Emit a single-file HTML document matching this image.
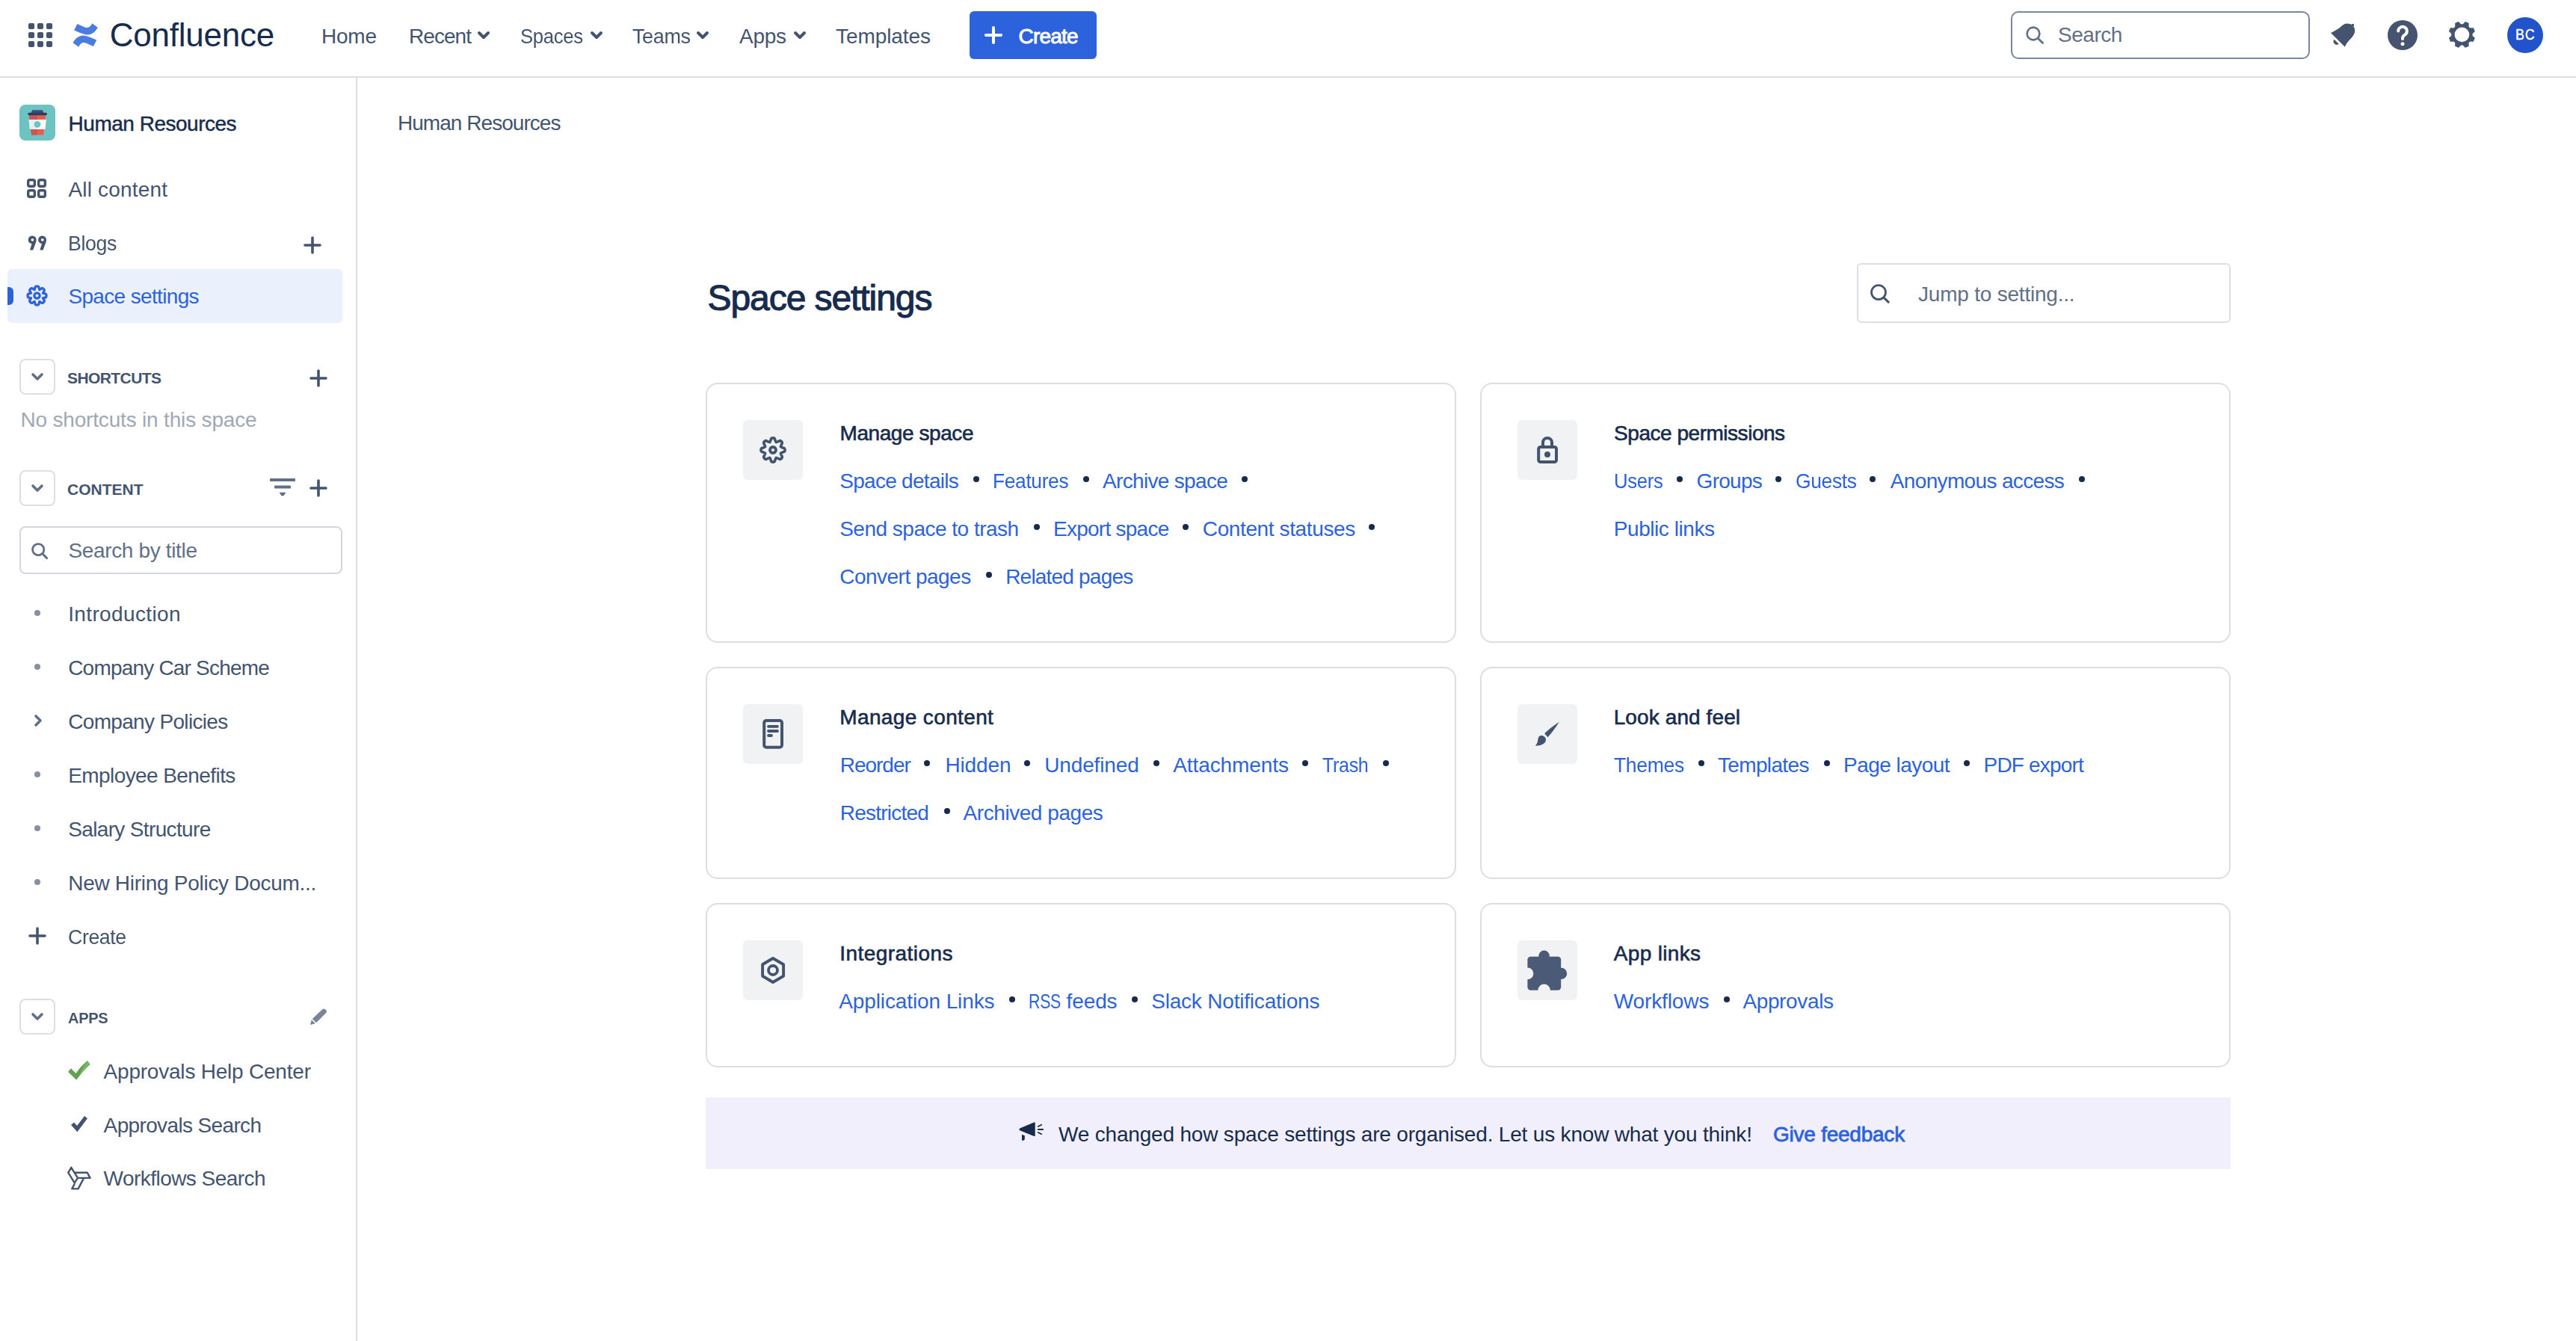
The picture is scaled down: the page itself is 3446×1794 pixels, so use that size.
<!DOCTYPE html>
<html>
<head>
<meta charset="utf-8">
<title>Space settings - Confluence</title>
<style>
@media (min-width:2400px){html{zoom:2}}
*{box-sizing:border-box;margin:0;padding:0}
body{width:1723px;height:897px;overflow:hidden;background:#fff;font-family:"Liberation Sans",sans-serif;font-size:14px;color:#44546F;position:relative}
.a{position:absolute;white-space:nowrap}
svg{position:absolute;overflow:visible}
</style>
</head>
<body>
<div class="a" style="left:0;top:51px;width:1723px;height:1px;background:#DCDEE3"></div>
<svg style="left:19px;top:15.5px" width="16" height="16" viewBox="0 0 16 16" fill="#44546F">
<rect x="0" y="0" width="4" height="4" rx="1"/><rect x="6" y="0" width="4" height="4" rx="1"/><rect x="12" y="0" width="4" height="4" rx="1"/>
<rect x="0" y="6" width="4" height="4" rx="1"/><rect x="6" y="6" width="4" height="4" rx="1"/><rect x="12" y="6" width="4" height="4" rx="1"/>
<rect x="0" y="12" width="4" height="4" rx="1"/><rect x="6" y="12" width="4" height="4" rx="1"/><rect x="12" y="12" width="4" height="4" rx="1"/></svg>
<svg style="left:49px;top:15.5px" width="16" height="16" viewBox="0 0 16 16" fill="#4A7CE0"><path d="M2.75 0.5 C6 2 8 3.1 9.5 3.0 C11 2.9 12 1.5 12.6 0.15 L16.4 2.9 C15 5.6 12.5 7.8 9.5 7.8 C7 7.7 3 5.8 0.56 4.8 Z"/><path d="M2.75 0.5 C6 2 8 3.1 9.5 3.0 C11 2.9 12 1.5 12.6 0.15 L16.4 2.9 C15 5.6 12.5 7.8 9.5 7.8 C7 7.7 3 5.8 0.56 4.8 Z" transform="rotate(180 8.1 8)"/></svg>
<div class="a" style="left:73.40px;top:11.41px;font-size:22px;line-height:24px;letter-spacing:-0.122px;color:#172B4D">Confluence</div>
<div class="a" style="left:215.00px;top:14.48px;font-size:14px;line-height:20px;letter-spacing:-0.117px;color:#44546F">Home</div>
<div class="a" style="left:273.50px;top:14.48px;font-size:14px;line-height:20px;letter-spacing:-0.470px;color:#44546F">Recent</div>
<div class="a" style="left:348.00px;top:14.48px;font-size:14px;line-height:20px;letter-spacing:-0.200px;color:#44546F;transform:scaleX(0.9192);transform-origin:0 0">Spaces</div>
<div class="a" style="left:423.00px;top:14.48px;font-size:14px;line-height:20px;letter-spacing:-0.200px;color:#44546F;transform:scaleX(0.9646);transform-origin:0 0">Teams</div>
<div class="a" style="left:494.50px;top:14.48px;font-size:14px;line-height:20px;letter-spacing:-0.135px;color:#44546F">Apps</div>
<div class="a" style="left:559.00px;top:14.48px;font-size:14px;line-height:20px;letter-spacing:-0.039px;color:#44546F">Templates</div>
<svg style="left:319.5px;top:21.2px" width="8" height="5" viewBox="0 0 8 5"><path d="M1 1 L4 4 L7 1" fill="none" stroke="#44546F" stroke-width="2" stroke-linecap="round" stroke-linejoin="round"/></svg>
<svg style="left:395.0px;top:21.2px" width="8" height="5" viewBox="0 0 8 5"><path d="M1 1 L4 4 L7 1" fill="none" stroke="#44546F" stroke-width="2" stroke-linecap="round" stroke-linejoin="round"/></svg>
<svg style="left:466.0px;top:21.2px" width="8" height="5" viewBox="0 0 8 5"><path d="M1 1 L4 4 L7 1" fill="none" stroke="#44546F" stroke-width="2" stroke-linecap="round" stroke-linejoin="round"/></svg>
<svg style="left:531.0px;top:21.2px" width="8" height="5" viewBox="0 0 8 5"><path d="M1 1 L4 4 L7 1" fill="none" stroke="#44546F" stroke-width="2" stroke-linecap="round" stroke-linejoin="round"/></svg>
<div class="a" style="left:648.5px;top:7.5px;width:85px;height:32px;background:#2C63DC;border-radius:3px"></div>
<svg style="left:658.5px;top:17.5px" width="12" height="12" viewBox="0 0 12 12"><path d="M6 1 V11 M1 6 H11" stroke="#fff" stroke-width="2" stroke-linecap="round"/></svg>
<div class="a" style="left:681.23px;top:14.48px;font-size:14px;line-height:20px;letter-spacing:-0.393px;color:#FFFFFF;-webkit-text-stroke:0.45px #FFFFFF">Create</div>
<div class="a" style="left:1345px;top:7.5px;width:200px;height:32px;border:1px solid #7A8699;border-radius:5px"></div>
<svg style="left:1355px;top:17.5px" width="12" height="12" viewBox="0 0 12 12"><circle cx="5" cy="5" r="4.2" fill="none" stroke="#626F86" stroke-width="1.3"/><path d="M8.1 8.1 L11.3 11.3" stroke="#626F86" stroke-width="1.4" stroke-linecap="round"/></svg>
<div class="a" style="left:1376.50px;top:13.58px;font-size:14px;line-height:20px;letter-spacing:-0.230px;color:#626F86">Search</div>
<svg style="left:1555px;top:11px" width="24" height="24" viewBox="0 0 24 24" fill="#44546F">
<path d="M4.0 11.0 C6.4 9.7 8.6 8.7 10.4 7.1 C12 5.7 13.2 4.7 14.9 4.7 C16.4 4.7 17.5 5.1 18.3 5.7 C19.5 6.8 20.2 8 20.1 9.7 C20 11.8 18.6 13.6 16.7 15.5 C15.3 17 14.2 18.5 13.4 20.4 Z"/>
<circle cx="18.7" cy="5.8" r="0.9"/><path d="M6.3 15.4 L9.3 18.4 A2.13 2.13 0 0 1 6.3 15.4 Z"/></svg>
<svg style="left:1597px;top:13.5px" width="20" height="20" viewBox="0 0 20 20"><circle cx="10" cy="10" r="10" fill="#46546F"/>
<path d="M7.1 7.3 A2.9 2.9 0 1 1 11.5 9.8 C10.6 10.4 10 10.9 10 12 V12.5" fill="none" stroke="#fff" stroke-width="2" stroke-linecap="round"/><circle cx="10" cy="15.9" r="1.25" fill="#fff"/></svg>
<svg style="left:1635px;top:11px" width="24" height="24" viewBox="0 0 24 24"><g transform="translate(11.7 12.2)" fill="#44546F" stroke="#44546F" stroke-width="0.5" stroke-linejoin="round"><circle r="6.0" fill="none" stroke-width="2.15"/><path d="M-2.0 -6.3 L-1.15 -8.65 L1.15 -8.65 L2.0 -6.3 Z" transform="rotate(22.5)"/><path d="M-2.0 -6.3 L-1.15 -8.65 L1.15 -8.65 L2.0 -6.3 Z" transform="rotate(67.5)"/><path d="M-2.0 -6.3 L-1.15 -8.65 L1.15 -8.65 L2.0 -6.3 Z" transform="rotate(112.5)"/><path d="M-2.0 -6.3 L-1.15 -8.65 L1.15 -8.65 L2.0 -6.3 Z" transform="rotate(157.5)"/><path d="M-2.0 -6.3 L-1.15 -8.65 L1.15 -8.65 L2.0 -6.3 Z" transform="rotate(202.5)"/><path d="M-2.0 -6.3 L-1.15 -8.65 L1.15 -8.65 L2.0 -6.3 Z" transform="rotate(247.5)"/><path d="M-2.0 -6.3 L-1.15 -8.65 L1.15 -8.65 L2.0 -6.3 Z" transform="rotate(292.5)"/><path d="M-2.0 -6.3 L-1.15 -8.65 L1.15 -8.65 L2.0 -6.3 Z" transform="rotate(337.5)"/></g></svg>
<div class="a" style="left:1677px;top:11.3px;width:24px;height:24px;border-radius:12px;background:#2253CB"></div>
<div class="a" style="left:1677px;top:13.05px;width:24px;text-align:center;font-size:10.5px;line-height:20px;letter-spacing:0.7px;text-indent:0.7px;color:#fff;-webkit-text-stroke:0.3px #fff;transform:scaleX(0.84)">BC</div>
<div class="a" style="left:238px;top:52px;width:1px;height:845px;background:#DCDEE3"></div>
<div class="a" style="left:13px;top:70px;width:24px;height:24px;border-radius:4px;background:#6CC3C1"></div>
<svg style="left:13px;top:70px" width="24" height="24" viewBox="0 0 24 24">
<path d="M6.5 7.0 H17.5 L17.3 9.95 H6.7 Z" fill="#EE5A4E"/><path d="M6.5 7.0 H12 V9.95 H6.7 Z" fill="#CD5450"/>
<path d="M6.3 10.0 H17.9 L17.2 16.45 H7.0 Z" fill="#FFFFFF"/><path d="M6.3 10.0 H11.9 V16.45 H7.0 Z" fill="#E1F2F2"/>
<circle cx="12" cy="13.2" r="2.2" fill="#6CC3C1"/>
<path d="M7.5 16.5 H16.5 L16.0 20.2 H8.1 Z" fill="#EE5A4E"/><path d="M7.5 16.5 H12 V20.2 H8.1 Z" fill="#CD5450"/>
<path d="M8.6 3.6 H15.4 L16.3 5.6 H7.7 Z" fill="#3A4E7C"/><rect x="5.6" y="5.4" width="12.9" height="1.7" rx="0.85" fill="#2C3D5E"/></svg>
<div class="a" style="left:45.81px;top:72.98px;font-size:14px;line-height:20px;letter-spacing:-0.247px;color:#172B4D;-webkit-text-stroke:0.22px #172B4D">Human Resources</div>
<svg style="left:18px;top:119.6px" width="13" height="13" viewBox="0 0 13 13" fill="none" stroke="#44546F" stroke-width="1.7">
<rect x="0.85" y="0.85" width="4.3" height="4.3" rx="1"/><rect x="7.85" y="0.85" width="4.3" height="4.3" rx="1"/>
<rect x="0.85" y="7.85" width="4.3" height="4.3" rx="1"/><rect x="7.85" y="7.85" width="4.3" height="4.3" rx="1"/></svg>
<div class="a" style="left:45.70px;top:117.18px;font-size:14px;line-height:20px;letter-spacing:0.093px;color:#44546F">All content</div>
<svg style="left:19px;top:157.5px" width="12.5" height="10" viewBox="0 0 12.5 10" fill="#44546F">
<path d="M2.7 0.3 A2.6 2.6 0 0 1 5.3 2.9 C5.3 3.6 5.2 4.1 4.9 4.9 L3.1 9.7 H1 L2.3 5.5 A2.6 2.6 0 0 1 2.7 0.3 Z"/>
<path d="M9.4 0.3 A2.6 2.6 0 0 1 12 2.9 C12 3.6 11.9 4.1 11.6 4.9 L9.8 9.7 H7.7 L9 5.5 A2.6 2.6 0 0 1 9.4 0.3 Z"/>
<circle cx="2.7" cy="2.9" r="0.95" fill="#fff"/><circle cx="9.4" cy="2.9" r="0.95" fill="#fff"/></svg>
<div class="a" style="left:45.70px;top:152.78px;font-size:14px;line-height:20px;letter-spacing:-0.200px;color:#44546F;transform:scaleX(0.9557);transform-origin:0 0">Blogs</div>
<svg style="left:203.0px;top:157.9px" width="12" height="12" viewBox="0 0 12 12"><path d="M6 1 V11 M1 6 H11" stroke="#44546F" stroke-width="1.8" stroke-linecap="round"/></svg>
<div class="a" style="left:5px;top:180px;width:224px;height:36px;background:#EAF0FC;border-radius:3px"></div>
<div class="a" style="left:5px;top:192px;width:4px;height:12px;background:#2C63DC;border-radius:0 3px 3px 0"></div>
<svg style="left:17.3px;top:190.5px" width="14.5" height="14.5" viewBox="0 0 24 24" fill="none" stroke="#2C63DC" stroke-width="2.7" stroke-linejoin="round"><path d="M9.28 5.44 L9.93 3.04 C9.50 1.18 14.50 1.18 14.07 3.04 L14.72 5.44 L16.88 4.20 C17.88 2.59 21.41 6.12 19.80 7.12 L18.56 9.28 L20.96 9.93 C22.82 9.50 22.82 14.50 20.96 14.07 L18.56 14.72 L19.80 16.88 C21.41 17.88 17.88 21.41 16.88 19.80 L14.72 18.56 L14.07 20.96 C14.50 22.82 9.50 22.82 9.93 20.96 L9.28 18.56 L7.12 19.80 C6.12 21.41 2.59 17.88 4.20 16.88 L5.44 14.72 L3.04 14.07 C1.18 14.50 1.18 9.50 3.04 9.93 L5.44 9.28 L4.20 7.12 C2.59 6.12 6.12 2.59 7.12 4.20 Z"/><circle cx="12" cy="12" r="3"/></svg>
<div class="a" style="left:45.70px;top:188.48px;font-size:14px;line-height:20px;letter-spacing:-0.326px;color:#2C63DC">Space settings</div>
<div class="a" style="left:13px;top:240.0px;width:24px;height:24px;border:1px solid #DCDFE4;border-radius:4px"></div>
<svg style="left:21px;top:249.5px" width="8" height="5" viewBox="0 0 8 5"><path d="M1 1 L4 4 L7 1" fill="none" stroke="#626F86" stroke-width="1.8" stroke-linecap="round" stroke-linejoin="round"/></svg>
<div class="a" style="left:45.00px;top:243.19px;font-size:10.5px;line-height:20px;letter-spacing:-0.291px;color:#44546F;font-weight:bold">SHORTCUTS</div>
<svg style="left:207.0px;top:247.0px" width="12" height="12" viewBox="0 0 12 12"><path d="M6 1 V11 M1 6 H11" stroke="#44546F" stroke-width="1.8" stroke-linecap="round"/></svg>
<div class="a" style="left:13.70px;top:270.98px;font-size:14px;line-height:20px;letter-spacing:-0.088px;color:#A1A8B5">No shortcuts in this space</div>
<div class="a" style="left:13px;top:314.4px;width:24px;height:24px;border:1px solid #DCDFE4;border-radius:4px"></div>
<svg style="left:21px;top:324.0px" width="8" height="5" viewBox="0 0 8 5"><path d="M1 1 L4 4 L7 1" fill="none" stroke="#626F86" stroke-width="1.8" stroke-linecap="round" stroke-linejoin="round"/></svg>
<div class="a" style="left:45.00px;top:317.29px;font-size:10.5px;line-height:20px;letter-spacing:0.009px;color:#44546F;font-weight:bold">CONTENT</div>
<svg style="left:180.5px;top:320px" width="17" height="12" viewBox="0 0 17 12" fill="#626F86">
<rect x="0" y="0" width="17" height="2" rx="0.5"/><rect x="3" y="4.8" width="11" height="2" rx="0.5"/><path d="M6.3 9.4 H10.7 L9.3 11.6 H7.7 Z"/></svg>
<svg style="left:207.0px;top:320.5px" width="12" height="12" viewBox="0 0 12 12"><path d="M6 1 V11 M1 6 H11" stroke="#44546F" stroke-width="1.8" stroke-linecap="round"/></svg>
<div class="a" style="left:13px;top:352px;width:216px;height:32px;border:1px solid #D3D7DE;border-radius:4px"></div>
<svg style="left:21px;top:363px" width="11" height="11" viewBox="0 0 11 11"><circle cx="4.6" cy="4.6" r="3.8" fill="none" stroke="#626F86" stroke-width="1.4"/><path d="M7.4 7.4 L10.3 10.3" stroke="#626F86" stroke-width="1.5" stroke-linecap="round"/></svg>
<div class="a" style="left:45.70px;top:358.48px;font-size:14px;line-height:20px;letter-spacing:-0.172px;color:#626F86">Search by title</div>
<div class="a" style="left:45.60px;top:400.98px;font-size:14px;line-height:20px;letter-spacing:0.185px;color:#44546F">Introduction</div>
<div class="a" style="left:23px;top:408.0px;width:4px;height:4px;border-radius:2px;background:#8590A2"></div>
<div class="a" style="left:45.60px;top:436.98px;font-size:14px;line-height:20px;letter-spacing:-0.401px;color:#44546F">Company Car Scheme</div>
<div class="a" style="left:23px;top:444.0px;width:4px;height:4px;border-radius:2px;background:#8590A2"></div>
<div class="a" style="left:45.60px;top:472.98px;font-size:14px;line-height:20px;letter-spacing:-0.336px;color:#44546F">Company Policies</div>
<svg style="left:23px;top:478.0px" width="5" height="8" viewBox="0 0 5 8"><path d="M1 1 L4 4 L1 7" fill="none" stroke="#626F86" stroke-width="1.8" stroke-linecap="round" stroke-linejoin="round"/></svg>
<div class="a" style="left:45.60px;top:508.98px;font-size:14px;line-height:20px;letter-spacing:-0.290px;color:#44546F">Employee Benefits</div>
<div class="a" style="left:23px;top:516.0px;width:4px;height:4px;border-radius:2px;background:#8590A2"></div>
<div class="a" style="left:45.60px;top:544.98px;font-size:14px;line-height:20px;letter-spacing:-0.324px;color:#44546F">Salary Structure</div>
<div class="a" style="left:23px;top:552.0px;width:4px;height:4px;border-radius:2px;background:#8590A2"></div>
<div class="a" style="left:45.60px;top:580.98px;font-size:14px;line-height:20px;letter-spacing:-0.140px;color:#44546F">New Hiring Policy Docum...</div>
<div class="a" style="left:23px;top:588.0px;width:4px;height:4px;border-radius:2px;background:#8590A2"></div>
<div class="a" style="left:45.60px;top:616.98px;font-size:14px;line-height:20px;letter-spacing:-0.200px;color:#44546F;transform:scaleX(0.9533);transform-origin:0 0">Create</div>
<svg style="left:19.0px;top:620.0px" width="12" height="12" viewBox="0 0 12 12"><path d="M6 1 V11 M1 6 H11" stroke="#44546F" stroke-width="1.8" stroke-linecap="round"/></svg>
<div class="a" style="left:13px;top:668.0px;width:24px;height:24px;border:1px solid #DCDFE4;border-radius:4px"></div>
<svg style="left:21px;top:677.5px" width="8" height="5" viewBox="0 0 8 5"><path d="M1 1 L4 4 L7 1" fill="none" stroke="#626F86" stroke-width="1.8" stroke-linecap="round" stroke-linejoin="round"/></svg>
<div class="a" style="left:45.30px;top:671.09px;font-size:10.5px;line-height:20px;letter-spacing:-0.200px;color:#44546F;font-weight:bold;transform:scaleX(0.9574);transform-origin:0 0">APPS</div>
<svg style="left:207.5px;top:674.5px" width="11.2" height="11" viewBox="0 0 11.2 11" fill="#7A8499">
<path d="M8.2 0.6 C8.7 0.1 9.4 0.1 9.9 0.6 L10.6 1.3 C11.1 1.8 11.1 2.5 10.6 3 L4 9.6 L1.4 7 Z"/><path d="M0.9 7.6 L3.4 10.1 L0 11 Z"/></svg>
<svg style="left:43px;top:706px" width="20" height="20" viewBox="0 0 20 20">
<path d="M4.48 8.66 L2.54 11.04 L8.13 16.4 C10.5 13 13.5 9.2 17.3 5.97 L15.5 3.5 C12.4 6 9.8 9 7.76 11.94 Z" fill="#62A052"/>
<path d="M15.8 3.9 C13.3 6.4 11.6 9.6 10.5 12.9 C12.6 10 14.6 7.6 17.0 5.7 Z" fill="#78B866"/></svg>
<div class="a" style="left:69.30px;top:706.78px;font-size:14px;line-height:20px;letter-spacing:-0.108px;color:#44546F">Approvals Help Center</div>
<svg style="left:47.5px;top:746.7px" width="11" height="11" viewBox="0 0 11 11"><path d="M0 6 L2 4.3 L4 6.5 L9 0 L11 1.6 L4.2 10.6 Z" fill="#44546F"/></svg>
<div class="a" style="left:69.30px;top:742.78px;font-size:14px;line-height:20px;letter-spacing:-0.320px;color:#44546F">Approvals Search</div>
<svg style="left:43px;top:776px" width="20" height="20" viewBox="0 0 20 20" fill="none" stroke="#44546F" stroke-width="1.2" stroke-linejoin="round">
<path d="M4.63 4.9 L2.66 8.4 L6.86 15.2 L9.0 11.95 Z M7.03 8.4 L15.4 8.4 L17.3 11.95 L9.0 11.95 M13.1 11.95 L9.3 19.2 L5.15 19.2 L7.0 15.6"/></svg>
<div class="a" style="left:69.30px;top:778.48px;font-size:14px;line-height:20px;letter-spacing:-0.271px;color:#44546F">Workflows Search</div>
<div class="a" style="left:266.00px;top:72.48px;font-size:14px;line-height:20px;letter-spacing:-0.481px;color:#44546F">Human Resources</div>
<div class="a" style="left:473.27px;top:183.71px;font-size:24px;line-height:32px;letter-spacing:-0.538px;color:#172B4D;-webkit-text-stroke:0.55px #172B4D">Space settings</div>
<div class="a" style="left:1242px;top:176px;width:250px;height:40px;border:1px solid #DCDFE4;border-radius:3px"></div>
<svg style="left:1251px;top:190px" width="13" height="13" viewBox="0 0 13 13"><circle cx="5.5" cy="5.55" r="4.75" fill="none" stroke="#44546F" stroke-width="1.4"/><path d="M9.0 9.1 L12.1 12.1" stroke="#44546F" stroke-width="1.5" stroke-linecap="round"/></svg>
<div class="a" style="left:1283.00px;top:186.98px;font-size:14px;line-height:20px;letter-spacing:-0.106px;color:#626F86">Jump to setting...</div>
<div class="a" style="left:472px;top:256px;width:502px;height:174px;border:1px solid #DCDEE3;border-radius:8px"></div><div class="a" style="left:497px;top:281px;width:40px;height:40px;background:#F1F2F4;border-radius:3px"></div>
<div class="a" style="left:990px;top:256px;width:502px;height:174px;border:1px solid #DCDEE3;border-radius:8px"></div><div class="a" style="left:1015px;top:281px;width:40px;height:40px;background:#F1F2F4;border-radius:3px"></div>
<div class="a" style="left:472px;top:446px;width:502px;height:142px;border:1px solid #DCDEE3;border-radius:8px"></div><div class="a" style="left:497px;top:471px;width:40px;height:40px;background:#F1F2F4;border-radius:3px"></div>
<div class="a" style="left:990px;top:446px;width:502px;height:142px;border:1px solid #DCDEE3;border-radius:8px"></div><div class="a" style="left:1015px;top:471px;width:40px;height:40px;background:#F1F2F4;border-radius:3px"></div>
<div class="a" style="left:472px;top:604px;width:502px;height:110px;border:1px solid #DCDEE3;border-radius:8px"></div><div class="a" style="left:497px;top:629px;width:40px;height:40px;background:#F1F2F4;border-radius:3px"></div>
<div class="a" style="left:990px;top:604px;width:502px;height:110px;border:1px solid #DCDEE3;border-radius:8px"></div><div class="a" style="left:1015px;top:629px;width:40px;height:40px;background:#F1F2F4;border-radius:3px"></div>
<svg style="left:497px;top:281px" width="40" height="40" viewBox="0 0 40 40" fill="none" stroke="#44546F" stroke-width="1.8" stroke-linejoin="round"><path d="M17.86 14.83 L18.66 13.13 C18.36 11.56 21.64 11.56 21.34 13.13 L22.14 14.83 L23.91 14.20 C24.81 12.87 27.13 15.19 25.80 16.09 L25.17 17.86 L26.87 18.66 C28.44 18.36 28.44 21.64 26.87 21.34 L25.17 22.14 L25.80 23.91 C27.13 24.81 24.81 27.13 23.91 25.80 L22.14 25.17 L21.34 26.87 C21.64 28.44 18.36 28.44 18.66 26.87 L17.86 25.17 L16.09 25.80 C15.19 27.13 12.87 24.81 14.20 23.91 L14.83 22.14 L13.13 21.34 C11.56 21.64 11.56 18.36 13.13 18.66 L14.83 17.86 L14.20 16.09 C12.87 15.19 15.19 12.87 16.09 14.20 Z"/><circle cx="20" cy="20" r="2.0" stroke-width="1.9"/></svg>
<svg style="left:1015px;top:281px" width="40" height="40" viewBox="0 0 40 40" fill="none" stroke="#44546F" stroke-width="2">
<path d="M17 18 V15 A3 3 0 0 1 23 15 V18"/><rect x="14.1" y="18" width="11.9" height="10" rx="1.3"/><circle cx="20" cy="23" r="2" fill="#44546F" stroke="none"/></svg>
<svg style="left:497px;top:471px" width="40" height="40" viewBox="0 0 40 40" fill="none" stroke="#44546F" stroke-width="2">
<rect x="14.1" y="11" width="11.9" height="17.85" rx="1.4"/><path d="M17 14.9 H23 M17 18 H23 M17 21 H19" stroke-width="1.9" stroke-linecap="round"/></svg>
<svg style="left:1015px;top:471px" width="40" height="40" viewBox="0 0 40 40" fill="#44546F">
<path d="M27.9 11.9 C24 14.5 20.2 17.4 18.1 19.7 L20.3 22.1 C23 19.2 25.8 15.3 27.9 11.9 Z"/>
<path d="M11.9 27.9 C13.3 26.2 13.6 24.9 13.7 23.5 C13.9 21.9 14.8 21 15.9 21 C17.6 21 19 22.3 19 23.9 C19 25.6 17.2 27.9 11.9 27.9 Z"/></svg>
<svg style="left:497px;top:629px" width="40" height="40" viewBox="0 0 40 40" fill="none" stroke="#44546F" stroke-width="1.95" stroke-linejoin="round">
<path d="M20 12 L27.05 16.1 V23.9 L20 28 L13.05 23.9 V16.1 Z"/><circle cx="20" cy="20" r="3.0" stroke-width="1.9"/></svg>
<svg style="left:1015px;top:630px" width="40" height="40" viewBox="0 0 40 40">
<defs><mask id="pzm" maskUnits="userSpaceOnUse" x="0" y="0" width="40" height="40"><rect x="0" y="0" width="40" height="40" fill="#fff"/><circle cx="6.7" cy="21.2" r="3.95" fill="#000"/><circle cx="17.8" cy="32.4" r="4.1" fill="#000"/></mask></defs>
<g mask="url(#pzm)" fill="#4B5A76"><rect x="6.7" y="9.85" width="22.4" height="22.55" rx="2.1"/><circle cx="17.8" cy="9.4" r="3.65"/><circle cx="29.3" cy="21.2" r="3.8"/></g></svg>
<div class="a" style="left:561.75px;top:279.98px;font-size:14px;line-height:20px;letter-spacing:-0.213px;color:#172B4D;-webkit-text-stroke:0.30px #172B4D">Manage space</div>
<div class="a" style="left:1079.55px;top:279.98px;font-size:14px;line-height:20px;letter-spacing:-0.236px;color:#172B4D;-webkit-text-stroke:0.30px #172B4D">Space permissions</div>
<div class="a" style="left:561.65px;top:469.98px;font-size:14px;line-height:20px;letter-spacing:0.184px;color:#172B4D;-webkit-text-stroke:0.30px #172B4D">Manage content</div>
<div class="a" style="left:1079.35px;top:469.98px;font-size:14px;line-height:20px;letter-spacing:0.052px;color:#172B4D;-webkit-text-stroke:0.30px #172B4D">Look and feel</div>
<div class="a" style="left:561.65px;top:627.98px;font-size:14px;line-height:20px;letter-spacing:0.221px;color:#172B4D;-webkit-text-stroke:0.30px #172B4D">Integrations</div>
<div class="a" style="left:1079.35px;top:627.98px;font-size:14px;line-height:20px;letter-spacing:0.173px;color:#172B4D;-webkit-text-stroke:0.30px #172B4D">App links</div>
<div class="a" style="left:561.60px;top:311.98px;font-size:14px;line-height:20px;letter-spacing:-0.355px;color:#2C63DC">Space details</div>
<div class="a" style="left:664.00px;top:311.98px;font-size:14px;line-height:20px;letter-spacing:-0.200px;color:#2C63DC;transform:scaleX(0.9435);transform-origin:0 0">Features</div>
<div class="a" style="left:737.50px;top:311.98px;font-size:14px;line-height:20px;letter-spacing:-0.336px;color:#2C63DC">Archive space</div>
<div class="a" style="left:561.60px;top:343.98px;font-size:14px;line-height:20px;letter-spacing:-0.252px;color:#2C63DC">Send space to trash</div>
<div class="a" style="left:704.50px;top:343.98px;font-size:14px;line-height:20px;letter-spacing:-0.373px;color:#2C63DC">Export space</div>
<div class="a" style="left:804.40px;top:343.98px;font-size:14px;line-height:20px;letter-spacing:-0.190px;color:#2C63DC">Content statuses</div>
<div class="a" style="left:561.60px;top:375.98px;font-size:14px;line-height:20px;letter-spacing:-0.255px;color:#2C63DC">Convert pages</div>
<div class="a" style="left:672.60px;top:375.98px;font-size:14px;line-height:20px;letter-spacing:-0.399px;color:#2C63DC">Related pages</div>
<div class="a" style="left:1079.40px;top:311.98px;font-size:14px;line-height:20px;letter-spacing:-0.200px;color:#2C63DC;transform:scaleX(0.9202);transform-origin:0 0">Users</div>
<div class="a" style="left:1134.80px;top:311.98px;font-size:14px;line-height:20px;letter-spacing:-0.361px;color:#2C63DC">Groups</div>
<div class="a" style="left:1201.00px;top:311.98px;font-size:14px;line-height:20px;letter-spacing:-0.200px;color:#2C63DC;transform:scaleX(0.9457);transform-origin:0 0">Guests</div>
<div class="a" style="left:1264.40px;top:311.98px;font-size:14px;line-height:20px;letter-spacing:-0.326px;color:#2C63DC">Anonymous access</div>
<div class="a" style="left:1079.40px;top:343.98px;font-size:14px;line-height:20px;letter-spacing:-0.221px;color:#2C63DC">Public links</div>
<div class="a" style="left:561.90px;top:501.98px;font-size:14px;line-height:20px;letter-spacing:-0.514px;color:#2C63DC">Reorder</div>
<div class="a" style="left:632.20px;top:501.98px;font-size:14px;line-height:20px;letter-spacing:-0.053px;color:#2C63DC">Hidden</div>
<div class="a" style="left:698.60px;top:501.98px;font-size:14px;line-height:20px;letter-spacing:-0.066px;color:#2C63DC">Undefined</div>
<div class="a" style="left:784.60px;top:501.98px;font-size:14px;line-height:20px;letter-spacing:-0.041px;color:#2C63DC">Attachments</div>
<div class="a" style="left:884.40px;top:501.98px;font-size:14px;line-height:20px;letter-spacing:-0.200px;color:#2C63DC;transform:scaleX(0.8965);transform-origin:0 0">Trash</div>
<div class="a" style="left:561.90px;top:533.98px;font-size:14px;line-height:20px;letter-spacing:-0.390px;color:#2C63DC">Restricted</div>
<div class="a" style="left:644.30px;top:533.98px;font-size:14px;line-height:20px;letter-spacing:-0.223px;color:#2C63DC">Archived pages</div>
<div class="a" style="left:1079.50px;top:501.98px;font-size:14px;line-height:20px;letter-spacing:-0.200px;color:#2C63DC;transform:scaleX(0.9502);transform-origin:0 0">Themes</div>
<div class="a" style="left:1149.00px;top:501.98px;font-size:14px;line-height:20px;letter-spacing:-0.326px;color:#2C63DC">Templates</div>
<div class="a" style="left:1233.00px;top:501.98px;font-size:14px;line-height:20px;letter-spacing:-0.265px;color:#2C63DC">Page layout</div>
<div class="a" style="left:1326.80px;top:501.98px;font-size:14px;line-height:20px;letter-spacing:-0.411px;color:#2C63DC">PDF export</div>
<div class="a" style="left:561.10px;top:659.98px;font-size:14px;line-height:20px;letter-spacing:-0.054px;color:#2C63DC">Application Links</div>
<div class="a" style="left:688.20px;top:659.98px;font-size:14px;line-height:20px;letter-spacing:-0.200px;color:#2C63DC;transform:scaleX(0.7645);transform-origin:0 0">RSS</div>
<div class="a" style="left:713.30px;top:659.98px;font-size:14px;line-height:20px;letter-spacing:-0.061px;color:#2C63DC">feeds</div>
<div class="a" style="left:770.10px;top:659.98px;font-size:14px;line-height:20px;letter-spacing:-0.099px;color:#2C63DC">Slack Notifications</div>
<div class="a" style="left:1079.40px;top:659.98px;font-size:14px;line-height:20px;letter-spacing:-0.063px;color:#2C63DC">Workflows</div>
<div class="a" style="left:1165.70px;top:659.98px;font-size:14px;line-height:20px;letter-spacing:-0.182px;color:#2C63DC">Approvals</div>
<div class="a" style="left:650.80px;top:318.30px;width:4px;height:4px;border-radius:2px;background:#172B4D"></div>
<div class="a" style="left:724.40px;top:318.30px;width:4px;height:4px;border-radius:2px;background:#172B4D"></div>
<div class="a" style="left:830.70px;top:318.30px;width:4px;height:4px;border-radius:2px;background:#172B4D"></div>
<div class="a" style="left:691.40px;top:350.30px;width:4px;height:4px;border-radius:2px;background:#172B4D"></div>
<div class="a" style="left:791.10px;top:350.30px;width:4px;height:4px;border-radius:2px;background:#172B4D"></div>
<div class="a" style="left:915.70px;top:350.30px;width:4px;height:4px;border-radius:2px;background:#172B4D"></div>
<div class="a" style="left:659.40px;top:382.30px;width:4px;height:4px;border-radius:2px;background:#172B4D"></div>
<div class="a" style="left:1121.30px;top:318.30px;width:4px;height:4px;border-radius:2px;background:#172B4D"></div>
<div class="a" style="left:1187.60px;top:318.30px;width:4px;height:4px;border-radius:2px;background:#172B4D"></div>
<div class="a" style="left:1250.50px;top:318.30px;width:4px;height:4px;border-radius:2px;background:#172B4D"></div>
<div class="a" style="left:1390.30px;top:318.30px;width:4px;height:4px;border-radius:2px;background:#172B4D"></div>
<div class="a" style="left:618.20px;top:508.30px;width:4px;height:4px;border-radius:2px;background:#172B4D"></div>
<div class="a" style="left:685.00px;top:508.30px;width:4px;height:4px;border-radius:2px;background:#172B4D"></div>
<div class="a" style="left:771.70px;top:508.30px;width:4px;height:4px;border-radius:2px;background:#172B4D"></div>
<div class="a" style="left:871.20px;top:508.30px;width:4px;height:4px;border-radius:2px;background:#172B4D"></div>
<div class="a" style="left:925.10px;top:508.30px;width:4px;height:4px;border-radius:2px;background:#172B4D"></div>
<div class="a" style="left:631.70px;top:540.30px;width:4px;height:4px;border-radius:2px;background:#172B4D"></div>
<div class="a" style="left:1136.20px;top:508.30px;width:4px;height:4px;border-radius:2px;background:#172B4D"></div>
<div class="a" style="left:1220.00px;top:508.30px;width:4px;height:4px;border-radius:2px;background:#172B4D"></div>
<div class="a" style="left:1313.50px;top:508.30px;width:4px;height:4px;border-radius:2px;background:#172B4D"></div>
<div class="a" style="left:675.20px;top:666.30px;width:4px;height:4px;border-radius:2px;background:#172B4D"></div>
<div class="a" style="left:757.00px;top:666.30px;width:4px;height:4px;border-radius:2px;background:#172B4D"></div>
<div class="a" style="left:1152.80px;top:666.30px;width:4px;height:4px;border-radius:2px;background:#172B4D"></div>
<div class="a" style="left:472px;top:734px;width:1020px;height:48px;background:#F1EFFB"></div>
<svg style="left:677.5px;top:747.5px" width="24" height="20" viewBox="0 0 24 20" fill="#172B4D">
<path d="M4.9 7.1 L14.1 3.3 C14.5 3.15 14.85 3.4 14.85 3.8 V12.0 C14.85 12.4 14.5 12.65 14.1 12.5 L4.9 8.8 C4.0 8.4 4.0 7.5 4.9 7.1 Z"/>
<path d="M6 11.4 L7.9 12.1 V14.3 C7.9 15 7.3 15.4 6.7 15.4 H6 Z"/>
<path d="M16.9 6.0 L19.1 4.9 M16.9 8 H20.1 M16.9 10 L19.1 11.1" stroke="#172B4D" stroke-width="0.9" stroke-linecap="round"/></svg>
<div class="a" style="left:708.00px;top:748.78px;font-size:14px;line-height:20px;letter-spacing:-0.093px;color:#172B4D">We changed how space settings are organised. Let us know what you think!</div>
<div class="a" style="left:1186.00px;top:748.78px;font-size:14px;line-height:20px;letter-spacing:-0.119px;color:#2C63DC;-webkit-text-stroke:0.40px #2C63DC">Give feedback</div>
</body>
</html>
